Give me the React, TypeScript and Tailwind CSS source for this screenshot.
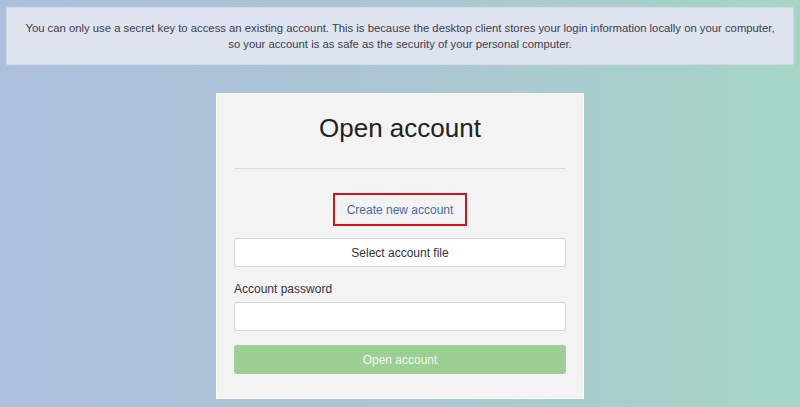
import React from "react";

export default function App() {
  return (
    <div
      className="w-[800px] h-[407px] overflow-hidden bg-gradient-to-r from-[#adbfdd] via-[#abc6d4] to-[#a6d5c6] pt-[7px] px-[6px]"
      style={{ fontFamily: '"Liberation Sans", Arial, sans-serif' }}
    >
      <div className="h-[58px] bg-[#dee3f0] border border-[#d3dbe8] rounded-[2px] flex flex-col items-center justify-center text-center text-[11.3px] leading-[16px] text-[#3b404c] px-[10px]">
        <p className="whitespace-nowrap">
          You can only use a secret key to access an existing account. This is because the desktop client stores your login information locally on your computer,
        </p>
        <p>so your account is as safe as the security of your personal computer.</p>
      </div>

      <div className="flex justify-center mt-[28px]">
        <div className="w-[368px] bg-[#f3f3f3] border border-[#fafafa] px-[17px] pt-[19px] pb-[24px] flex flex-col">
          <h1 className="text-center text-[26px] leading-[30px] text-[#222222]">Open account</h1>
          <div className="mt-[25px] h-px bg-[#dcdcdc]" />
          <div className="flex justify-center mt-[24px]">
            <div className="border-2 border-[#d2141d] w-[134px] h-[33px] flex items-center justify-center">
              <span className="text-[12px] text-[#4b6a99]">Create new account</span>
            </div>
          </div>
          <button className="mt-[12px] h-[29px] bg-white border border-[#d6d6d6] rounded-[3px] text-[12px] text-[#333333] flex items-center justify-center">
            Select account file
          </button>
          <label className="mt-[14px] text-[12px] leading-[16px] text-[#333333]">Account password</label>
          <div className="mt-[5px] h-[29px] bg-white border border-[#d6d6d6] rounded-[3px]" />
          <button className="mt-[14px] h-[29px] bg-[#9dcf95] rounded-[3px] text-[12px] text-[#eef8ec] flex items-center justify-center">
            Open account
          </button>
        </div>
      </div>
    </div>
  );
}
